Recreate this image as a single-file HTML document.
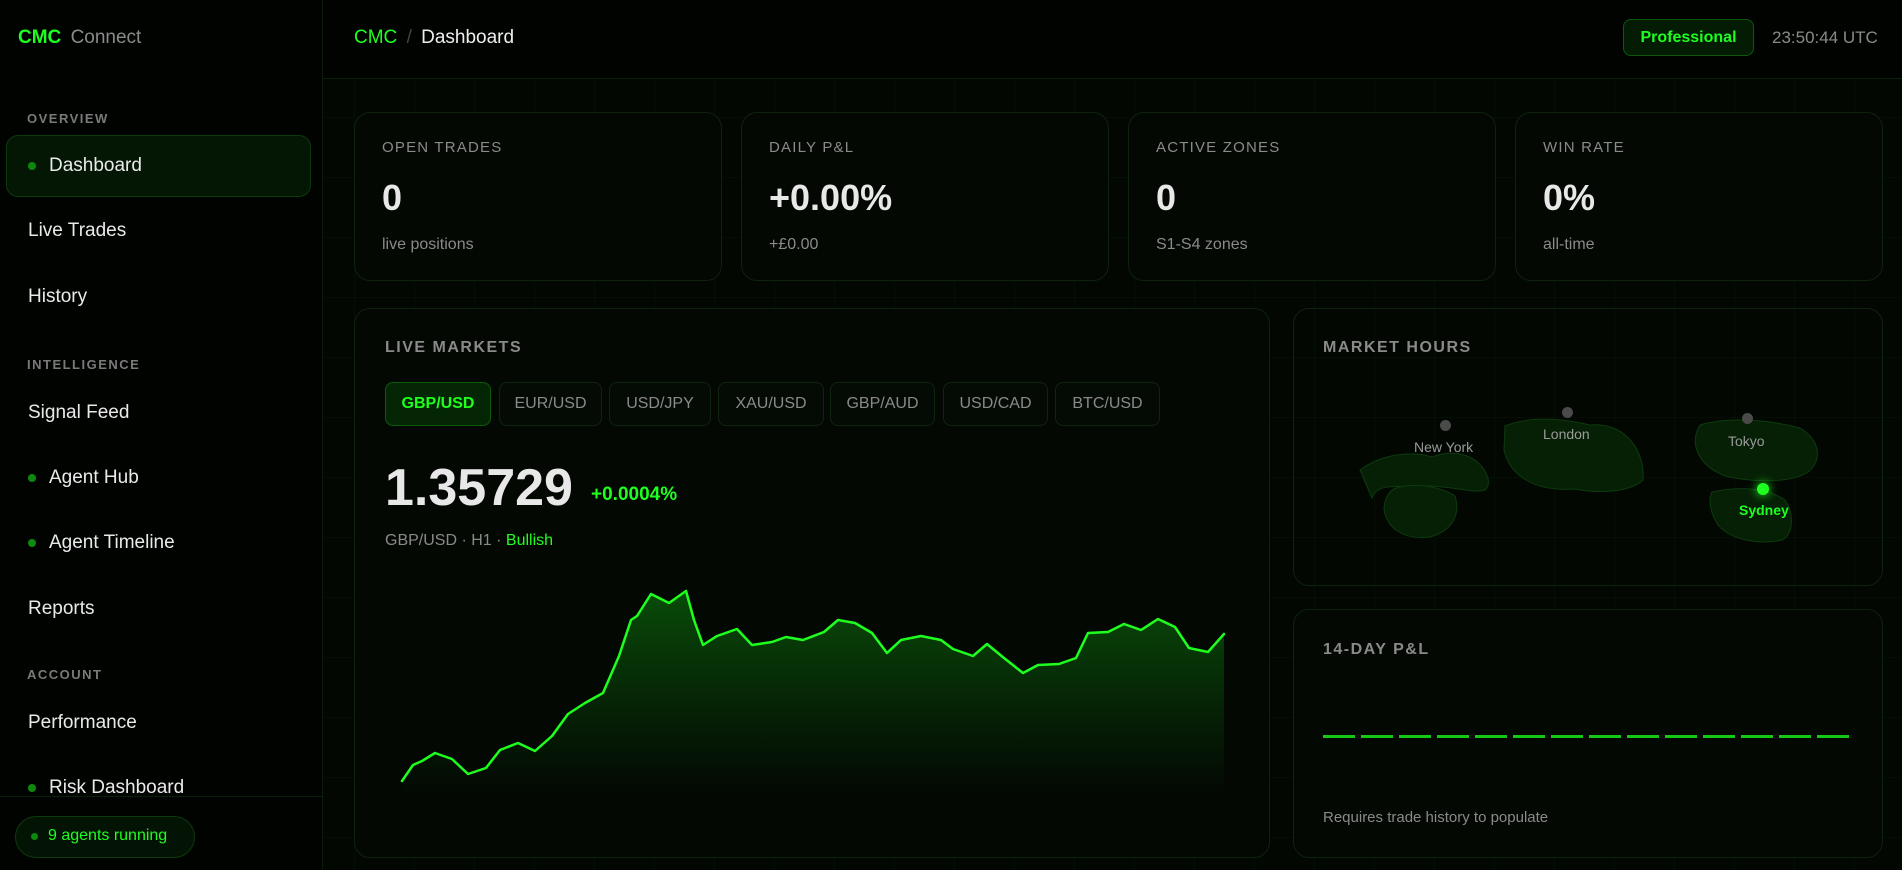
<!DOCTYPE html>
<html><head><meta charset="utf-8"><style>
*{box-sizing:border-box;margin:0;padding:0}
body{width:1902px;height:870px;overflow:hidden;background:#020502;font-family:"Liberation Sans",sans-serif;color:#e6e6e6;position:relative}
.side{position:absolute;left:0;top:0;width:323px;height:870px;background:#010301;border-right:1px solid #0c1a0c}
.main{position:absolute;left:323px;top:79px;width:1579px;height:791px;background-color:#020702;
background-image:linear-gradient(rgba(40,120,40,.06) 1px,transparent 1px),linear-gradient(90deg,rgba(40,120,40,.06) 1px,transparent 1px);
background-size:60px 60px;background-position:31px 38px}
.hdr{position:absolute;left:0;top:0;width:1902px;height:79px;border-bottom:1px solid #0c1f0c;background:#010301}
.a{position:absolute;white-space:nowrap}
.g{color:#1fff1f}
.sec{font-size:13px;font-weight:bold;letter-spacing:1.5px;color:#7a7a7a}
.nav{font-size:19px;color:#eaeaea}
.dot{position:absolute;width:8px;height:8px;border-radius:50%;background:#0d8a0d}
.card{position:absolute;background:#030803;border:1px solid #0e220e;border-radius:16px}
.lbl{font-size:15px;letter-spacing:1.2px;color:#8a8a8a}
.val{font-size:36px;font-weight:bold;color:#e8e8e8}
.sub{font-size:16px;color:#8a8a8a}
.tt{font-size:16px;font-weight:bold;letter-spacing:1.5px;color:#8a8a8a}
.tab{position:absolute;top:382px;height:44px;border:1px solid #102410;border-radius:8px;background:#040a04;font-size:16px;color:#8a8a8a;text-align:center;line-height:42px}
</style></head><body>
<div class="hdr"></div>
<div class="side"></div>
<div class="main"></div>

<div class="a" style="left:18px;top:27px;font-size:19px"><b class="g">CMC</b> <span style="color:#8a8a8a;margin-left:4px">Connect</span></div>
<div class="a" style="left:354px;top:27px;font-size:19px"><span class="g">CMC</span> <span style="color:#444;margin:0 4px">/</span> <span style="color:#eee">Dashboard</span></div>
<div class="a" style="left:1623px;top:19px;width:131px;height:37px;border:1px solid #0d5a0d;background:#031c03;border-radius:8px;color:#1fff1f;font-weight:bold;font-size:16px;text-align:center;line-height:35px">Professional</div>
<div class="a" style="left:1772px;top:28px;font-size:17px;color:#8a8a8a">23:50:44 UTC</div>

<div class="a sec" style="left:27px;top:111px">OVERVIEW</div>
<div class="a" style="left:6px;top:135px;width:305px;height:62px;background:#041704;border:1px solid #0c3a0c;border-radius:12px"></div>
<div class="dot" style="left:28px;top:162px"></div>
<div class="a nav g" style="left:49px;top:155px">Dashboard</div>
<div class="a nav" style="left:28px;top:220px">Live Trades</div>
<div class="a nav" style="left:28px;top:286px">History</div>
<div class="a sec" style="left:27px;top:357px">INTELLIGENCE</div>
<div class="a nav" style="left:28px;top:402px">Signal Feed</div>
<div class="dot" style="left:28px;top:474px"></div>
<div class="a nav" style="left:49px;top:467px">Agent Hub</div>
<div class="dot" style="left:28px;top:539px"></div>
<div class="a nav" style="left:49px;top:532px">Agent Timeline</div>
<div class="a nav" style="left:28px;top:598px">Reports</div>
<div class="a sec" style="left:27px;top:667px">ACCOUNT</div>
<div class="a nav" style="left:28px;top:712px">Performance</div>
<div class="dot" style="left:28px;top:784px"></div>
<div class="a nav" style="left:49px;top:777px">Risk Dashboard</div>
<div class="a" style="left:0;top:796px;width:322px;height:74px;background:#010301;border-top:1px solid #0c1f0c"></div>
<div class="a" style="left:15px;top:816px;width:180px;height:42px;border:1px solid #0c3a0c;background:#041404;border-radius:21px"></div>
<div class="dot" style="left:31px;top:833px;width:7px;height:7px"></div>
<div class="a g" style="left:48px;top:827px;font-size:16px">9 agents running</div>

<div class="card" style="left:354px;top:112px;width:368px;height:169px"></div>
<div class="card" style="left:741px;top:112px;width:368px;height:169px"></div>
<div class="card" style="left:1128px;top:112px;width:368px;height:169px"></div>
<div class="card" style="left:1515px;top:112px;width:368px;height:169px"></div>
<div class="a lbl" style="left:382px;top:139px">OPEN TRADES</div>
<div class="a val" style="left:382px;top:177px">0</div>
<div class="a sub" style="left:382px;top:236px">live positions</div>
<div class="a lbl" style="left:769px;top:139px">DAILY P&amp;L</div>
<div class="a val" style="left:769px;top:177px">+0.00%</div>
<div class="a sub" style="left:769px;top:236px">+£0.00</div>
<div class="a lbl" style="left:1156px;top:139px">ACTIVE ZONES</div>
<div class="a val" style="left:1156px;top:177px">0</div>
<div class="a sub" style="left:1156px;top:236px">S1-S4 zones</div>
<div class="a lbl" style="left:1543px;top:139px">WIN RATE</div>
<div class="a val" style="left:1543px;top:177px">0%</div>
<div class="a sub" style="left:1543px;top:236px">all-time</div>

<div class="card" style="left:354px;top:308px;width:916px;height:550px"></div>
<div class="a tt" style="left:385px;top:339px">LIVE MARKETS</div>
<div class="tab" style="left:385px;width:106px;background:#052605;border-color:#0d5a0d;color:#1fff1f;font-weight:bold">GBP/USD</div>
<div class="tab" style="left:499px;width:103px">EUR/USD</div>
<div class="tab" style="left:609px;width:102px">USD/JPY</div>
<div class="tab" style="left:718px;width:106px">XAU/USD</div>
<div class="tab" style="left:830px;width:105px">GBP/AUD</div>
<div class="tab" style="left:943px;width:105px">USD/CAD</div>
<div class="tab" style="left:1055px;width:105px">BTC/USD</div>
<div class="a" style="left:385px;top:458px;font-size:52px;font-weight:bold;color:#e8e8e8">1.35729</div>
<div class="a g" style="left:591px;top:484px;font-size:19px;font-weight:bold">+0.0004%</div>
<div class="a" style="left:385px;top:532px;font-size:16px;color:#8a8a8a">GBP/USD · H1 · <span class="g">Bullish</span></div>
<svg class="a" style="left:0;top:0" width="1902" height="870">
<defs><linearGradient id="f" gradientUnits="userSpaceOnUse" x1="0" y1="590" x2="0" y2="795"><stop offset="0" stop-color="#0b6a0b" stop-opacity=".7"/><stop offset="1" stop-color="#0b5a0b" stop-opacity="0"/></linearGradient></defs>
<path d="M402,781 L413,765 L422,761 L435,753 L452,759 L468,774 L486,768 L500,750 L518,743 L535,751 L552,736 L568,714 L585,703 L603,693 L619,656 L631,620 L637,616 L651,594 L669,603 L686,591 L694,620 L703,645 L717,636 L737,629 L752,645 L772,642 L786,637 L803,640 L824,632 L838,620 L855,623 L872,633 L887,653 L901,640 L921,636 L941,640 L953,649 L973,656 L987,644 L1004,658 L1023,673 L1038,665 L1059,664 L1076,658 L1088,633 L1108,632 L1124,624 L1141,630 L1158,619 L1175,627 L1189,648 L1208,652 L1224,634 L1224,795 L402,795 Z" fill="url(#f)"/>
<path d="M402,781 L413,765 L422,761 L435,753 L452,759 L468,774 L486,768 L500,750 L518,743 L535,751 L552,736 L568,714 L585,703 L603,693 L619,656 L631,620 L637,616 L651,594 L669,603 L686,591 L694,620 L703,645 L717,636 L737,629 L752,645 L772,642 L786,637 L803,640 L824,632 L838,620 L855,623 L872,633 L887,653 L901,640 L921,636 L941,640 L953,649 L973,656 L987,644 L1004,658 L1023,673 L1038,665 L1059,664 L1076,658 L1088,633 L1108,632 L1124,624 L1141,630 L1158,619 L1175,627 L1189,648 L1208,652 L1224,634" fill="none" stroke="#1fff1f" stroke-width="2.5" stroke-linejoin="round" stroke-linecap="round"/>
<g fill="#062006" stroke="#0e3a0e" stroke-width="1">
<path d="M1360,470 C1380,455 1410,450 1432,457 C1455,448 1480,455 1488,478 C1492,500 1470,488 1430,486 C1395,488 1378,482 1372,498 Z"/>
<path d="M1392,490 C1405,482 1440,485 1455,496 C1460,512 1455,530 1430,537 C1405,540 1388,530 1384,510 C1384,500 1388,494 1392,490 Z"/>
<path d="M1505,426 C1530,416 1560,418 1590,425 C1625,422 1645,450 1643,480 C1630,492 1600,494 1575,489 C1535,492 1510,476 1504,450 Z"/>
<path d="M1700,425 C1730,416 1770,420 1800,428 C1820,440 1823,460 1808,472 C1790,484 1750,482 1725,476 C1700,466 1688,445 1700,425 Z"/>
<path d="M1712,492 C1735,487 1765,486 1785,500 C1795,515 1793,535 1782,540 C1760,545 1730,540 1718,525 C1710,512 1708,500 1712,492 Z"/>
</g>
</svg>

<div class="card" style="left:1293px;top:308px;width:590px;height:278px;background:transparent"></div>
<div class="a tt" style="left:1323px;top:339px">MARKET HOURS</div>
<div class="dot" style="left:1440px;top:420px;width:11px;height:11px;background:#4a4a4a"></div>
<div class="dot" style="left:1562px;top:407px;width:11px;height:11px;background:#4a4a4a"></div>
<div class="dot" style="left:1742px;top:413px;width:11px;height:11px;background:#4a4a4a"></div>
<div class="dot" style="left:1757px;top:483px;width:12px;height:12px;background:#1fff1f;box-shadow:0 0 10px #1fff1f"></div>
<div class="a" style="left:1414px;top:439px;font-size:14px;color:#9a9a9a">New York</div>
<div class="a" style="left:1543px;top:426px;font-size:14px;color:#9a9a9a">London</div>
<div class="a" style="left:1728px;top:433px;font-size:14px;color:#9a9a9a">Tokyo</div>
<div class="a g" style="left:1739px;top:502px;font-size:14px;font-weight:bold">Sydney</div>

<div class="card" style="left:1293px;top:609px;width:590px;height:249px"></div>
<div class="a tt" style="left:1323px;top:641px">14-DAY P&amp;L</div>
<div class="a" style="left:1323px;top:735px;width:530px;height:3px;background:repeating-linear-gradient(90deg,#17c717 0 32px,transparent 32px 38px)"></div>
<div class="a" style="left:1323px;top:809px;font-size:15px;color:#8a8a8a">Requires trade history to populate</div>
</body></html>
